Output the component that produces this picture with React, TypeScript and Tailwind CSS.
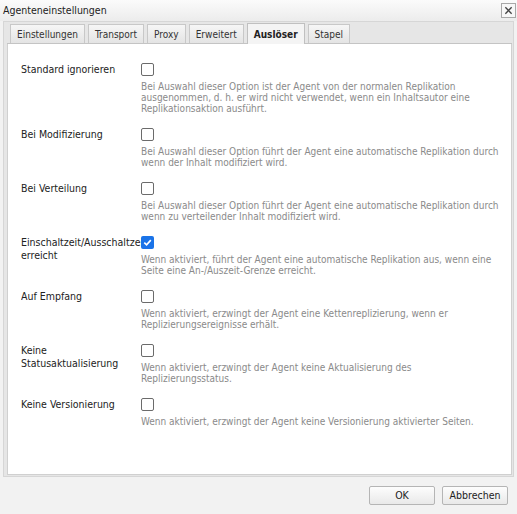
const FONT = "font-['DejaVu_Sans_Condensed','DejaVu_Sans',sans-serif]";

const TABS = ["Einstellungen", "Transport", "Proxy", "Erweitert", "Auslöser", "Stapel"];
const ACTIVE = "Auslöser";

type Option = {
  label: string;
  checked?: boolean;
  desc: string[];
};

const OPTIONS: Option[] = [
  {
    label: "Standard ignorieren",
    desc: [
      "Bei Auswahl dieser Option ist der Agent von der normalen Replikation",
      "ausgenommen, d. h. er wird nicht verwendet, wenn ein Inhaltsautor eine",
      "Replikationsaktion ausführt.",
    ],
  },
  {
    label: "Bei Modifizierung",
    desc: [
      "Bei Auswahl dieser Option führt der Agent eine automatische Replikation durch",
      "wenn der Inhalt modifiziert wird.",
    ],
  },
  {
    label: "Bei Verteilung",
    desc: [
      "Bei Auswahl dieser Option führt der Agent eine automatische Replikation durch",
      "wenn zu verteilender Inhalt modifiziert wird.",
    ],
  },
  {
    label: "Einschaltzeit/Ausschaltzeit erreicht",
    checked: true,
    desc: [
      "Wenn aktiviert, führt der Agent eine automatische Replikation aus, wenn eine",
      "Seite eine An-/Auszeit-Grenze erreicht.",
    ],
  },
  {
    label: "Auf Empfang",
    desc: [
      "Wenn aktiviert, erzwingt der Agent eine Kettenreplizierung, wenn er",
      "Replizierungsereignisse erhält.",
    ],
  },
  {
    label: "Keine Statusaktualisierung",
    desc: [
      "Wenn aktiviert, erzwingt der Agent keine Aktualisierung des",
      "Replizierungsstatus.",
    ],
  },
  {
    label: "Keine Versionierung",
    desc: ["Wenn aktiviert, erzwingt der Agent keine Versionierung aktivierter Seiten."],
  },
];

function Checkbox({ checked }: { checked?: boolean }) {
  if (checked) {
    return (
      <span className="flex h-[13px] w-[13px] items-center justify-center rounded-[2px] bg-[#1a73e8]">
        <svg viewBox="0 0 12 12" className="h-[11px] w-[11px]">
          <path d="M2.5 6.2 L5 8.6 L9.6 3.4" fill="none" stroke="#fff" strokeWidth="1.8" />
        </svg>
      </span>
    );
  }
  return <span className="block h-[13px] w-[13px] rounded-[2px] border border-[#6b6b6b] bg-white" />;
}

function OptionRow({ option }: { option: Option }) {
  return (
    <div className="flex">
      <div className="w-[120px] shrink-0 overflow-hidden text-[10.5px] leading-[13px] text-[#222]">
        {option.label}
      </div>
      <div className="flex flex-col">
        <Checkbox checked={option.checked} />
        <div className="mt-[5px] text-[10px] leading-[11px] text-[#8a8a8a]">
          {option.desc.map((line) => (
            <div key={line} className="whitespace-nowrap">
              {line}
            </div>
          ))}
        </div>
      </div>
    </div>
  );
}

export default function App() {
  return (
    <div className={`flex h-[514px] w-[517px] flex-col bg-[#f2f2f2] ${FONT}`}>
      {/* Title bar */}
      <div className="flex h-[21px] items-center justify-between bg-gradient-to-b from-[#fbfbfb] to-[#ececec] pl-[3px] pr-[1px]">
        <span className="text-[10.5px] text-[#222]">Agenteneinstellungen</span>
        <button className="flex h-[15px] w-[15px] items-center justify-center border border-[#a8a8a8] bg-[#f7f7f7]">
          <svg viewBox="0 0 10 10" className="h-[9px] w-[9px]">
            <path d="M1.5 1.5 L8.5 8.5 M8.5 1.5 L1.5 8.5" stroke="#444" strokeWidth="1.5" />
          </svg>
        </button>
      </div>

      {/* Tab panel */}
      <div className="mx-[3px] flex flex-1 flex-col border border-[#d6d6d6] bg-[#e6e6e6] pb-[1px] pl-[3px] pr-[1px]">
        <div className="flex h-[22px] items-end gap-[3px] border-b border-[#c4c4c4] pl-[3px]">
          {TABS.map((tab) => {
            const active = tab === ACTIVE;
            return (
              <div
                key={tab}
                className={
                  active
                    ? "-mb-px flex h-[21px] items-center border border-b-0 border-[#c0c0c0] bg-[#f4f4f4] px-[6px] text-[10px] font-bold text-[#222]"
                    : "flex h-[19px] items-center border border-b-0 border-[#c8c8c8] bg-gradient-to-b from-[#f6f6f6] to-[#e4e4e4] px-[6px] text-[10px] text-[#333]"
                }
              >
                {tab}
              </div>
            );
          })}
        </div>
        <div className="flex flex-1 flex-col gap-[14px] border border-t-0 border-[#d0d0d0] bg-white pl-[13px] pt-[19px]">
          {OPTIONS.map((o) => (
            <OptionRow key={o.label} option={o} />
          ))}
        </div>
      </div>

      {/* Footer */}
      <div className="flex h-[37px] shrink-0 items-center justify-end gap-[7px] pr-[9px]">
        <button className="h-[19px] w-[66px] rounded-[2px] border border-[#b5b5b5] bg-gradient-to-b from-[#fdfdfd] to-[#e9e9e9] text-[10.5px] text-[#222]">
          OK
        </button>
        <button className="h-[19px] w-[66px] rounded-[2px] border border-[#b5b5b5] bg-gradient-to-b from-[#fdfdfd] to-[#e9e9e9] text-[10.5px] text-[#222]">
          Abbrechen
        </button>
      </div>
    </div>
  );
}
